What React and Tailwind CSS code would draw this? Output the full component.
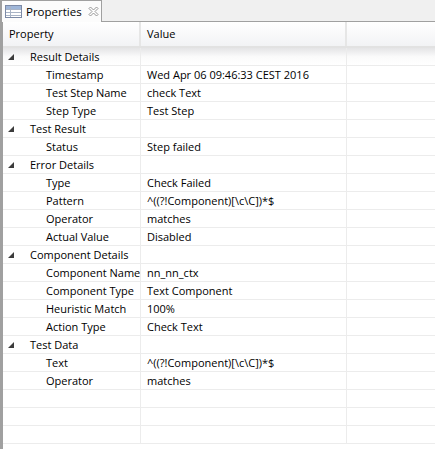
import React from 'react';

const groups = [
  {
    name: 'Result Details',
    rows: [
      ['Timestamp', 'Wed Apr 06 09:46:33 CEST 2016'],
      ['Test Step Name', 'check Text'],
      ['Step Type', 'Test Step'],
    ],
  },
  { name: 'Test Result', rows: [['Status', 'Step failed']] },
  {
    name: 'Error Details',
    rows: [
      ['Type', 'Check Failed'],
      ['Pattern', '^((?!Component)[\\c\\C])*$'],
      ['Operator', 'matches'],
      ['Actual Value', 'Disabled'],
    ],
  },
  {
    name: 'Component Details',
    rows: [
      ['Component Name', 'nn_nn_ctx'],
      ['Component Type', 'Text Component'],
      ['Heuristic Match', '100%'],
      ['Action Type', 'Check Text'],
    ],
  },
  {
    name: 'Test Data',
    rows: [
      ['Text', '^((?!Component)[\\c\\C])*$'],
      ['Operator', 'matches'],
    ],
  },
];

function TableIcon() {
  return (
    <svg width="17" height="13" viewBox="0 0 17 13">
      <rect x="0.5" y="0.5" width="16" height="12" fill="#fff" stroke="#7c8aa6" />
      <rect x="1" y="1" width="15" height="3" fill="#9fb6d8" />
      <path d="M1 4.5h15M1 7.5h15M1 10.5h15M5.5 1v11" stroke="#a9b4c6" />
    </svg>
  );
}

function CloseIcon() {
  return (
    <svg width="11" height="11" viewBox="0 0 11 11">
      <path
        d="M1 2.5L2.5 1L5.5 4L8.5 1L10 2.5L7 5.5L10 8.5L8.5 10L5.5 7L2.5 10L1 8.5L4 5.5Z"
        fill="#fff"
        stroke="#8a8a8a"
        strokeWidth="0.9"
        strokeLinejoin="round"
      />
    </svg>
  );
}

function Twisty() {
  return (
    <svg width="6" height="6" viewBox="0 0 6 6">
      <path d="M6 0V6H0Z" fill="#3c3c3c" />
    </svg>
  );
}

function Row({ first, second, group, shade }) {
  return (
    <div
      className={`grid grid-cols-[138px_206px_1fr] h-[18px] border-b border-[#ececec] ${
        shade ? 'bg-gradient-to-b from-[#e4e4e6] via-[#fafafa] to-white' : ''
      }`}
    >
      <div className="flex items-center pt-px border-r border-[#ececec] overflow-hidden whitespace-nowrap">
        {group ? (
          <>
            <span className="ml-[5px] mr-[16px] flex">
              <Twisty />
            </span>
            <span>{first}</span>
          </>
        ) : (
          <span className="pl-[43px]">{first}</span>
        )}
      </div>
      <div className="flex items-center pt-px border-r border-[#ececec] pl-[6px] overflow-hidden whitespace-nowrap">
        {second}
      </div>
      <div />
    </div>
  );
}

export default function App() {
  const rows = [];
  groups.forEach((g, gi) => {
    rows.push(<Row key={g.name} first={g.name} group shade={gi === 0} />);
    g.rows.forEach(([k, v], i) => rows.push(<Row key={g.name + i} first={k} second={v} />));
  });
  for (let i = 0; i < 3; i++) rows.push(<Row key={'empty' + i} />);

  return (
    <div
      className="w-[435px] h-[449px] overflow-hidden bg-[#f0f0f0] text-[11px] text-black"
      style={{ fontFamily: '"Open Sans", "Noto Sans", sans-serif' }}
    >
      <div className="flex h-[22px]">
        <div className="flex items-center w-[102px] bg-[#fcfcfc] border-l-2 border-r border-t border-[#a0a0a0] pl-[3px] text-[11.5px]">
          <TableIcon />
          <span className="ml-[4px]">Properties</span>
          <span className="ml-[6px] flex">
            <CloseIcon />
          </span>
        </div>
        <div className="flex-1 border-b border-[#a0a0a0]" />
      </div>
      <div className="h-[427px] bg-white border-l-[3px] border-[#a0a0a0] overflow-hidden">
        <div className="grid grid-cols-[138px_206px_1fr] h-[26px] bg-gradient-to-b from-white to-[#f2f3f5] border-b-2 border-[#e2e2e2]">
          <div className="flex items-center pl-[6px] border-r-2 border-[#e6e6e6]">Property</div>
          <div className="flex items-center pl-[6px] border-r-2 border-[#e6e6e6]">Value</div>
          <div />
        </div>
        {rows}
      </div>
    </div>
  );
}
